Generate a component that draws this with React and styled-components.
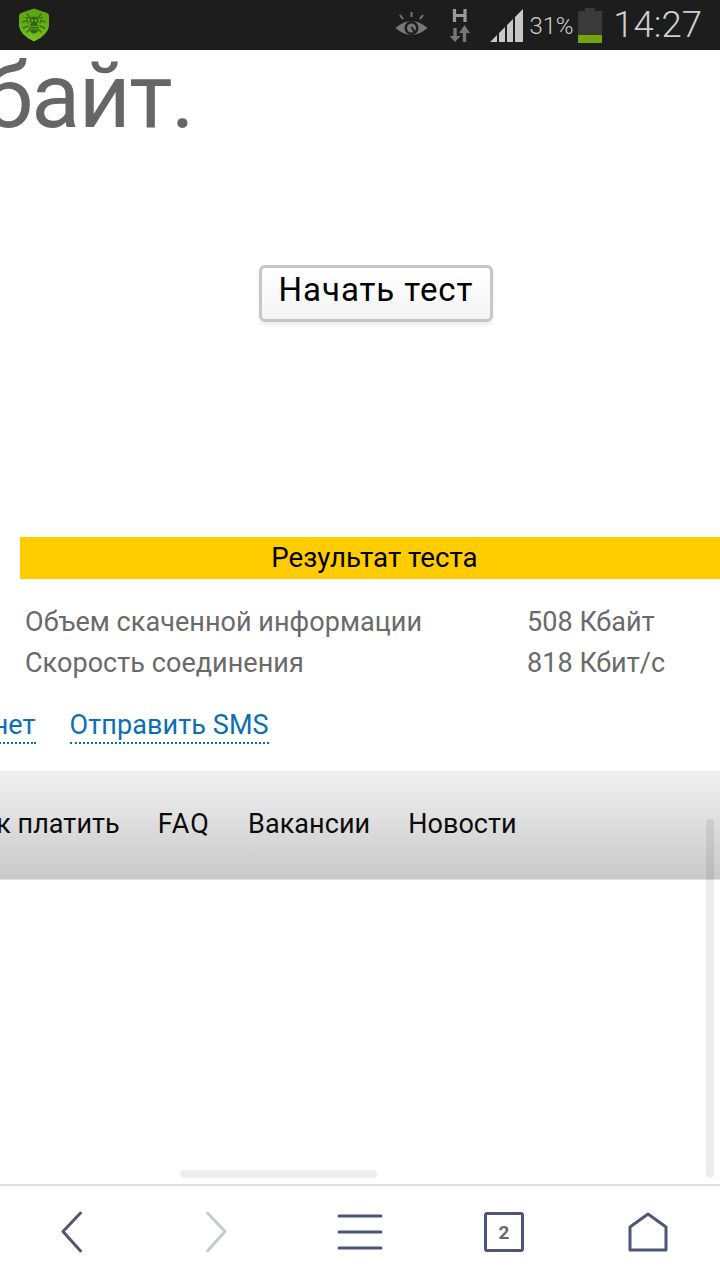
import React from "react";
import styled, { createGlobalStyle } from "styled-components";

const Global = createGlobalStyle`
  html, body { margin: 0; padding: 0; background: #fff; }
  body { font-family: Roboto, "Noto Sans", sans-serif; }
  * { box-sizing: border-box; }
`;

const Screen = styled.div`
  position: relative;
  width: 720px;
  height: 1280px;
  overflow: hidden;
  display: flex;
  flex-direction: column;
  background: #fff;
`;

const StatusBar = styled.header`
  height: 50px;
  flex: none;
  background: #1d1d1d;
  display: flex;
  align-items: center;
  padding: 0 18px 0 18px;
`;

const StatusRight = styled.div`
  margin-left: auto;
  display: flex;
  align-items: center;
`;

const Percent = styled.span`
  font-size: 24px;
  font-weight: 300;
  color: #cfcfcf;
  margin: 1px 5px 0 7px;
  letter-spacing: -0.2px;
`;

const Clock = styled.span`
  font-size: 36.5px;
  font-weight: 300;
  color: #cfcfcf;
  margin-left: 11px;
  line-height: 50px;
`;

const Page = styled.main`
  flex: 1;
  min-height: 0;
  display: flex;
  flex-direction: column;
`;

const Title = styled.h1`
  margin: -1px 0 0 -17px;
  height: 216px;
  font-size: 90px;
  line-height: 96px;
  letter-spacing: -1.5px;
  font-weight: 400;
  color: #666;
  white-space: nowrap;
`;

const ButtonRow = styled.div`
  display: flex;
  padding-left: 259px;
`;

const TestButton = styled.button`
  width: 234px;
  height: 57px;
  border: 3px solid #c6c6c6;
  border-radius: 6px;
  background: linear-gradient(#fff, #f4f4f4);
  box-shadow: 0 3px 4px rgba(0, 0, 0, 0.08);
  font-family: Roboto, sans-serif;
  font-size: 33px;
  letter-spacing: 0.95px;
  color: #000;
  padding: 0 0 8px;
`;

const ResultBar = styled.div`
  margin: 215px 0 0 20px;
  height: 42px;
  background: #ffcc00;
  font-size: 27.7px;
  line-height: 42px;
  text-align: center;
  color: #000;
  padding-left: 9px;
`;

const Stats = styled.div`
  margin: 27px 0 0 25px;
  display: grid;
  grid-template-columns: 502px auto;
  row-gap: 9px;
  font-size: 27px;
  line-height: 32px;
  letter-spacing: 0.05px;
  color: #6a6a6a;
`;

const Stat = styled.span`
  white-space: nowrap;
`;

const Links = styled.nav`
  margin-top: 30px;
  height: 62px;
  display: flex;
  gap: 34px;
  margin-left: -84px;
`;

const DotLink = styled.a`
  height: 35px;
  font-size: 27px;
  line-height: 32px;
  letter-spacing: 0.08px;
  color: #0a70b0;
  border-bottom: 2px dotted #0a70b0;
  white-space: nowrap;
`;

const Menu = styled.nav`
  height: 109px;
  flex: none;
  border-top: 2px solid #ececec;
  border-bottom: 1px solid #e2e2e2;
  background: linear-gradient(#f0f0f0, #c9c9c9);
  display: flex;
  align-items: flex-start;
  gap: 38px;
  padding: 33px 0 0;
  font-size: 27px;
  line-height: 36px;
  letter-spacing: 0.05px;
  color: #0b0b0b;
`;

const MenuItem = styled.span`
  white-space: nowrap;
  letter-spacing: ${(p) => (p.$wide ? "1.2px" : "inherit")};
  &:first-child { margin-left: -36px; }
`;

const VBar = styled.div`
  position: absolute;
  left: 706px;
  top: 819px;
  width: 8px;
  height: 359px;
  border-radius: 4px;
  background: rgba(0, 0, 0, 0.075);
`;

const HBar = styled.div`
  position: absolute;
  left: 180px;
  top: 1170px;
  width: 197px;
  height: 8px;
  border-radius: 4px;
  background: #eee;
`;

const BottomBar = styled.footer`
  height: 96px;
  flex: none;
  border-top: 2px solid #dedede;
  background: #fff;
  display: grid;
  grid-template-columns: repeat(5, 1fr);
  justify-items: center;
  align-items: center;
  padding-bottom: 2px;
`;

const NavSlot = styled.div`
  position: relative;
  width: 48px;
  height: 48px;
  display: flex;
  align-items: center;
  justify-content: center;
`;

const TabCount = styled.span`
  position: absolute;
  inset: 0;
  display: flex;
  align-items: center;
  justify-content: center;
  font-size: 19px;
  font-weight: 700;
  color: #666;
`;

const navColor = "#4d5676";

const Shield = () => (
  <svg width="32" height="34" viewBox="0 0 32 34">
    <defs>
      <linearGradient id="sg" x1="0" y1="0" x2="0" y2="1">
        <stop offset="0" stopColor="#5ba514" />
        <stop offset="0.6" stopColor="#68b018" />
        <stop offset="1" stopColor="#7cc41e" />
      </linearGradient>
    </defs>
    <path d="M16 0.5 L29 5 Q31 5.500 31 8 L31 18 Q30 27 16 33.500 Q2 27 1 18 L1 8 Q1 5.500 3 5 Z" fill="url(#sg)" />
    <g stroke="#3a7212" strokeWidth="1.500" fill="none" strokeLinecap="round">
      <path d="M9 6 L12 9.500 L8 10 M23 6 L20 9.500 L24 10" />
      <path d="M5 14 L9 12.500 L10 15 M27 14 L23 12.500 L22 15" />
      <path d="M5.500 20 L10 18 M26.500 20 L22 18" />
      <path d="M9 24 L12 21 M23 24 L20 21" />
    </g>
    <ellipse cx="16" cy="12.500" rx="4.500" ry="4" fill="#34680f" />
    <ellipse cx="16" cy="20" rx="4.500" ry="5.500" fill="#34680f" />
    <path d="M12 18.500 H20 M12 21 H20" stroke="#5ea31a" strokeWidth="1" />
    <circle cx="14.300" cy="12.500" r="1.100" fill="#7cc41f" />
    <circle cx="17.700" cy="12.500" r="1.100" fill="#7cc41f" />
  </svg>
);

const Eye = () => (
  <svg width="33" height="26" viewBox="0 0 33 26" style={{ marginRight: 21 }}>
    <path d="M0.500 16 Q16.500 2 32.500 16 Q16.500 30 0.500 16 Z" fill="#777" />
    <circle cx="16.500" cy="16" r="7" fill="#1d1d1d" />
    <circle cx="16.500" cy="16" r="4.500" fill="#777" />
    <path d="M16.500 15 L19.500 20" stroke="#1d1d1d" strokeWidth="2" />
    <path d="M16.500 0 V5 M5 3 L8 7 M28 3 L25 7" stroke="#777" strokeWidth="2" fill="none" />
  </svg>
);

const Network = () => (
  <svg width="22" height="34" viewBox="0 0 22 34" style={{ marginRight: 19 }}>
    <path d="M5.500 1 V14 M16 1 V14 M5.500 7.500 H16" stroke="#9a9a9a" strokeWidth="3.200" fill="none" />
    <path d="M15.500 34 V24" stroke="#777" strokeWidth="3.400" />
    <path d="M10 25 L15.500 17 L21 25 Z" fill="#777" />
    <path d="M6 20 V29" stroke="#777" strokeWidth="3.400" />
    <path d="M0.500 28 H11.500 L6 34 Z" fill="#777" />
  </svg>
);

const Signal = () => (
  <svg width="33" height="33" viewBox="0 0 33 33">
    <path d="M0 33 L7 26 V33 Z M9 33 V24 L15 18 V33 Z M17 33 V16 L23 10 V33 Z M25 33 V8 L33 0 V33 Z" fill="#c8c8c8" />
  </svg>
);

const Battery = () => (
  <svg width="24" height="35" viewBox="0 0 24 35">
    <rect x="7" y="0" width="10" height="4" fill="#3a3a3a" />
    <rect x="0" y="3" width="24" height="24" fill="#3a3a3a" />
    <rect x="0" y="27" width="24" height="8" fill="#74a60b" />
  </svg>
);

const Back = ({ color, flip }) => (
  <svg width="22" height="42" viewBox="0 0 22 42" style={flip ? { transform: "scaleX(-1)" } : undefined}>
    <path d="M19.500 2 L2 20.500 L19.500 40" fill="none" stroke={color} strokeWidth="3" strokeLinecap="round" strokeLinejoin="round" />
  </svg>
);

const Lines = () => (
  <svg width="46" height="36" viewBox="0 0 46 36">
    <path d="M2 2 H44 M2 18 H44 M2 34 H44" fill="none" stroke={navColor} strokeWidth="3" strokeLinecap="round" />
  </svg>
);

const TabsBox = () => (
  <svg width="40" height="40" viewBox="0 0 40 40">
    <rect x="1.500" y="1.500" width="37" height="37" rx="1.500" fill="none" stroke={navColor} strokeWidth="3" />
  </svg>
);

const Home = () => (
  <svg width="40" height="40" viewBox="0 0 40 40">
    <path d="M20 2 L38 15 V38 H2 V15 Z" fill="none" stroke={navColor} strokeWidth="3" strokeLinejoin="round" />
  </svg>
);

export default function App() {
  return (
    <Screen>
      <Global />
      <StatusBar>
        <Shield />
        <StatusRight>
          <Eye />
          <Network />
          <Signal />
          <Percent>31%</Percent>
          <Battery />
          <Clock>14:27</Clock>
        </StatusRight>
      </StatusBar>
      <Page>
        <Title>байт.</Title>
        <ButtonRow>
          <TestButton>Начать тест</TestButton>
        </ButtonRow>
        <ResultBar>Результат теста</ResultBar>
        <Stats>
          <Stat>Объем скаченной информации</Stat>
          <Stat>508 Кбайт</Stat>
          <Stat>Скорость соединения</Stat>
          <Stat>818 Кбит/с</Stat>
        </Stats>
        <Links>
          <DotLink>Интернет</DotLink>
          <DotLink>Отправить SMS</DotLink>
        </Links>
        <Menu>
          <MenuItem>Как платить</MenuItem>
          <MenuItem $wide>FAQ</MenuItem>
          <MenuItem>Вакансии</MenuItem>
          <MenuItem>Новости</MenuItem>
        </Menu>
      </Page>
      <BottomBar>
        <NavSlot><Back color={navColor} /></NavSlot>
        <NavSlot><Back color="#c6c8d4" flip /></NavSlot>
        <NavSlot><Lines /></NavSlot>
        <NavSlot><TabsBox /><TabCount>2</TabCount></NavSlot>
        <NavSlot><Home /></NavSlot>
      </BottomBar>
      <VBar />
      <HBar />
    </Screen>
  );
}
